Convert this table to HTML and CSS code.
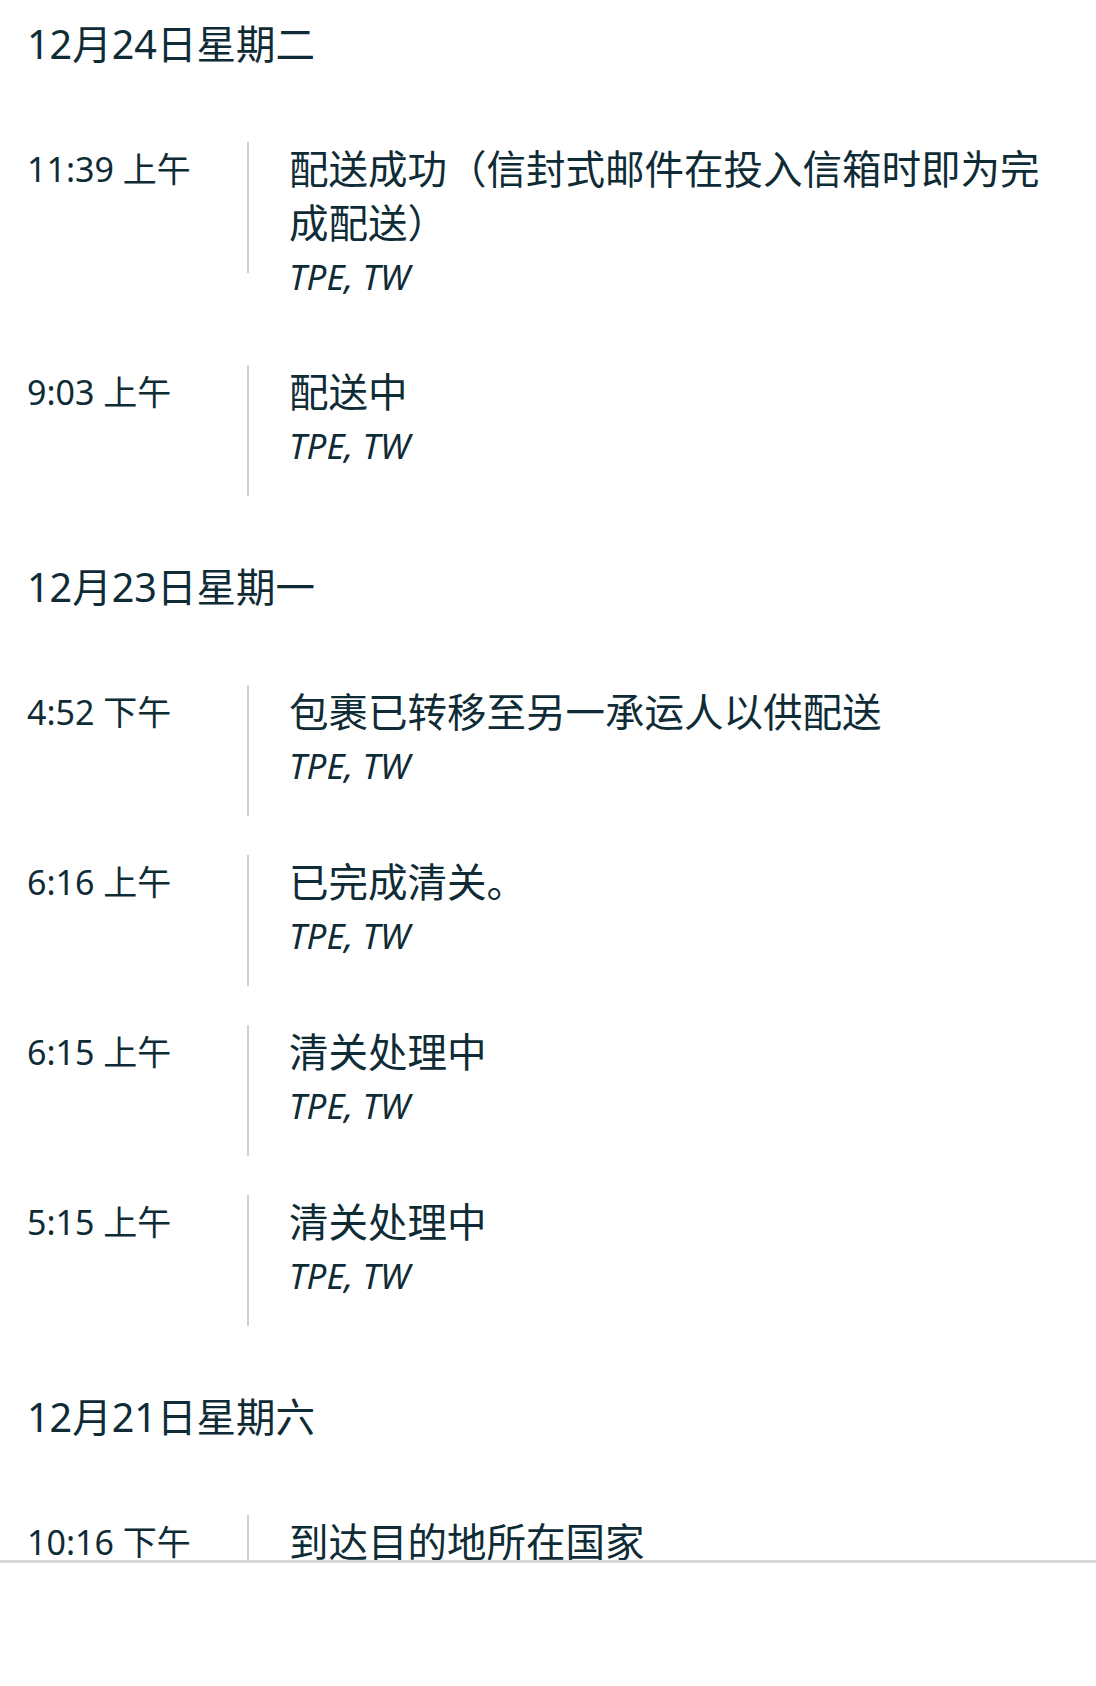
FILE: index.html
```html
<!DOCTYPE html>
<html lang="zh-CN">
<head>
<meta charset="utf-8">
<link rel="stylesheet" href="styles.css">
</head>
<body>
<div class="viewport">
  <div class="scroll">
    <section class="day">
      <h2 class="day-title">12月24日星期二</h2>
      <div class="events">
        <div class="event">
          <div class="time">11:39 上午</div>
          <div class="rule"></div>
          <div class="info">
            <div class="status">配送成功（信封式邮件在投入信箱时即为完成配送）</div>
            <div class="loc">TPE, TW</div>
          </div>
        </div>
        <div class="event">
          <div class="time">9:03 上午</div>
          <div class="rule"></div>
          <div class="info">
            <div class="status">配送中</div>
            <div class="loc">TPE, TW</div>
          </div>
        </div>
      </div>
    </section>
    <section class="day">
      <h2 class="day-title">12月23日星期一</h2>
      <div class="events">
        <div class="event">
          <div class="time">4:52 下午</div>
          <div class="rule"></div>
          <div class="info">
            <div class="status">包裹已转移至另一承运人以供配送</div>
            <div class="loc">TPE, TW</div>
          </div>
        </div>
        <div class="event">
          <div class="time">6:16 上午</div>
          <div class="rule"></div>
          <div class="info">
            <div class="status">已完成清关。</div>
            <div class="loc">TPE, TW</div>
          </div>
        </div>
        <div class="event">
          <div class="time">6:15 上午</div>
          <div class="rule"></div>
          <div class="info">
            <div class="status">清关处理中</div>
            <div class="loc">TPE, TW</div>
          </div>
        </div>
        <div class="event">
          <div class="time">5:15 上午</div>
          <div class="rule"></div>
          <div class="info">
            <div class="status">清关处理中</div>
            <div class="loc">TPE, TW</div>
          </div>
        </div>
      </div>
    </section>
    <section class="day">
      <h2 class="day-title">12月21日星期六</h2>
      <div class="events">
        <div class="event">
          <div class="time">10:16 下午</div>
          <div class="rule"></div>
          <div class="info">
            <div class="status">到达目的地所在国家</div>
            <div class="loc">TPE, TW</div>
          </div>
        </div>
      </div>
    </section>
  </div>
</div>
</body>
</html>
```

FILE: styles.css
```css
html, body {
  margin: 0;
  padding: 0;
  background: #ffffff;
}

body {
  font-family: "Noto Sans", "Noto Sans CJK SC", sans-serif;
  color: #0f2c36;
}

.viewport {
  height: 1560px;
  overflow: hidden;
  border-bottom: 3px solid #d5d9d9;
}

.scroll {
  padding-top: 17px;
}

.day + .day {
  margin-top: 64px;
}

.day-title {
  margin: 0 0 71px;
  padding-left: 27px;
  font-size: 39.5px;
  line-height: 54px;
  font-weight: 400;
}

.events {
  display: flex;
  flex-direction: column;
  gap: 39px;
}

.event {
  display: flex;
  align-items: flex-start;
}

.time {
  box-sizing: border-box;
  width: 247px;
  flex: none;
  padding-left: 27px;
  padding-top: 2px;
  font-size: 34px;
  line-height: 51px;
}

.rule {
  flex: none;
  width: 2px;
  height: 131px;
  background: #d0d1d4;
}

.info {
  flex: 1;
  min-width: 0;
  padding-left: 40px;
  padding-right: 27px;
}

.status {
  font-size: 39.5px;
  line-height: 54px;
}

.loc {
  font-size: 35px;
  font-style: italic;
  line-height: 54px;
  padding-bottom: 22px;
}
```
